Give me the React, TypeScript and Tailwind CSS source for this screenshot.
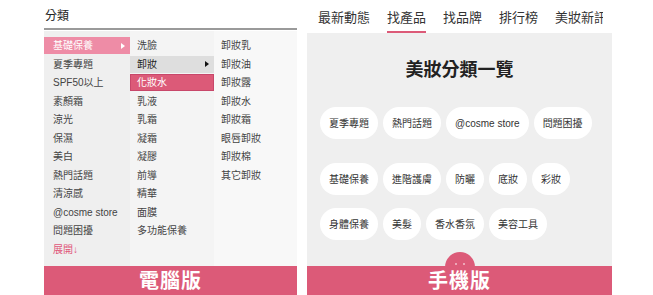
import React from "react";

const font = { fontFamily: '"Liberation Sans", "Noto Sans CJK TC", sans-serif' };

const col1 = ["基礎保養", "夏季專題", "SPF50以上", "素顏霜", "涼光", "保濕", "美白", "熱門話題", "清涼感", "@cosme store", "問題困擾"];
const col2 = ["洗臉", "卸妝", "化妝水", "乳液", "乳霜", "凝霜", "凝膠", "前導", "精華", "面膜", "多功能保養"];
const col3 = ["卸妝乳", "卸妝油", "卸妝露", "卸妝水", "卸妝霜", "眼唇卸妝", "卸妝棉", "其它卸妝"];

const row1 = ["夏季專題", "熱門話題", "@cosme store", "問題困擾"];
const row2 = ["基礎保養", "進階護膚", "防曬", "底妝", "彩妝", "身體保養", "美髮", "香水香氛", "美容工具"];

function Tri({ white }: { white?: boolean }) {
  return (
    <svg width="4" height="6" viewBox="0 0 4 6" className="shrink-0">
      <path d="M0 0 L4 3 L0 6 Z" fill={white ? "#ffffff" : "#111111"} />
    </svg>
  );
}

function Chip({ label }: { label: string }) {
  return (
    <div className="h-[32px] px-[9px] rounded-full bg-white flex items-center text-[10px] text-[#333] whitespace-nowrap">
      {label}
    </div>
  );
}

export default function App() {
  return (
    <div className="w-[653px] h-[295px] bg-white flex overflow-hidden" style={font}>
      {/* Left: desktop */}
      <div className="ml-[44px] w-[253px] h-full flex flex-col">
        <div className="h-[28px] pl-[1px] pt-[8px] text-[12px] leading-[16px] text-[#222]">分類</div>
        <div className="h-[2px] bg-[#9a9a9a]" />
        <div className="flex-1 flex text-[10px] text-[#444] bg-white pt-[1px]">
          <div className="w-[86px] bg-[#efefef] pt-[6px] flex flex-col gap-[1.5px]">
            {col1.map((t, i) =>
              i === 0 ? (
                <div key={t} className="h-[17px] pl-[9px] pr-[5px] flex items-center justify-between bg-[#ee8ca6] text-white">
                  <span>{t}</span>
                  <Tri white />
                </div>
              ) : (
                <div key={t} className="h-[17px] pl-[9px] flex items-center">
                  {t}
                </div>
              )
            )}
            <div className="h-[17px] pl-[9px] flex items-center text-[#e0577a]">展開↓</div>
          </div>
          <div className="w-[84px] bg-[#f4f4f4] pt-[6px] flex flex-col gap-[1.5px]">
            {col2.map((t, i) =>
              i === 1 ? (
                <div key={t} className="h-[17px] pl-[7px] pr-[5px] flex items-center justify-between bg-[#dedede] text-[#222]">
                  <span>{t}</span>
                  <Tri />
                </div>
              ) : i === 2 ? (
                <div key={t} className="h-[17px] pl-[6px] flex items-center bg-[#dc5a78] border border-[#c8476a] text-white">
                  {t}
                </div>
              ) : (
                <div key={t} className="h-[17px] pl-[7px] flex items-center">
                  {t}
                </div>
              )
            )}
          </div>
          <div className="w-[83px] bg-[#f8f8f8] pt-[6px] flex flex-col gap-[1.5px]">
            {col3.map((t) => (
              <div key={t} className="h-[17px] pl-[7px] flex items-center">
                {t}
              </div>
            ))}
          </div>
        </div>
        <div className="h-[29px] bg-[#dc5a78] flex items-center justify-center text-white text-[20px] font-bold tracking-[1px]">
          電腦版
        </div>
      </div>

      {/* Right: mobile */}
      <div className="ml-[10px] w-[305px] h-full flex flex-col">
        <div className="h-[33px] w-[296px] overflow-hidden flex items-start pl-[11px] gap-[17px] text-[13px] text-[#333] whitespace-nowrap">
          {["最新動態", "找產品", "找品牌", "排行榜", "美妝新訊"].map((t, i) => (
            <div key={t} className="flex flex-col items-center pt-[9px] shrink-0">
              <span className="leading-[18px]">{t}</span>
              {i === 1 ? <div className="mt-[4px] h-[2px] w-full bg-[#dc5a78]" /> : null}
            </div>
          ))}
        </div>
        <div className="flex-1 bg-[#efefef] flex flex-col relative">
          <div className="pt-[25px] text-center text-[18px] leading-[24px] font-bold text-[#222]">美妝分類一覽</div>
          <div className="mt-[25px] pl-[13px] flex gap-[5px]">
            {row1.map((t) => (
              <Chip key={t} label={t} />
            ))}
          </div>
          <div className="mt-[24px] pl-[13px] pr-[30px] flex flex-wrap gap-x-[5px] gap-y-[13px]">
            {row2.slice(0, 5).map((t) => (
              <Chip key={t} label={t} />
            ))}
          </div>
          <div className="mt-[13px] pl-[13px] flex gap-[5px]">
            {row2.slice(5).map((t) => (
              <Chip key={t} label={t} />
            ))}
          </div>
          <div className="absolute left-[138px] bottom-[-16px] w-[30px] h-[30px] rounded-full bg-[#dc5a78] flex items-start justify-center gap-[6px] pt-[11px]">
            <span className="w-[2px] h-[2px] rounded-full bg-[#f3c0cc]" />
            <span className="w-[2px] h-[2px] rounded-full bg-[#f3c0cc]" />
          </div>
        </div>
        <div className="h-[29px] bg-[#dc5a78] flex items-center justify-center text-white text-[20px] font-bold tracking-[1px] relative z-10">
          手機版
        </div>
      </div>
    </div>
  );
}
